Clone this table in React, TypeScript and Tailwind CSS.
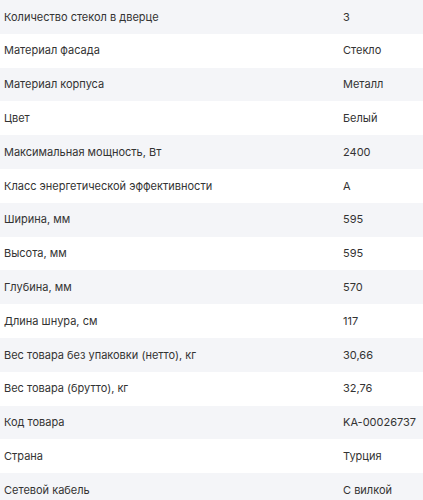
const specs = [
  ["Количество стекол в дверце", "3"],
  ["Материал фасада", "Стекло"],
  ["Материал корпуса", "Металл"],
  ["Цвет", "Белый"],
  ["Максимальная мощность, Вт", "2400"],
  ["Класс энергетической эффективности", "A"],
  ["Ширина, мм", "595"],
  ["Высота, мм", "595"],
  ["Глубина, мм", "570"],
  ["Длина шнура, см", "117"],
  ["Вес товара без упаковки (нетто), кг", "30,66"],
  ["Вес товара (брутто), кг", "32,76"],
  ["Код товара", "KA-00026737"],
  ["Страна", "Турция"],
  ["Сетевой кабель", "С вилкой"],
];

export default function App() {
  return (
    <div className="w-[423px] h-[500px] overflow-hidden bg-white font-['Inter',sans-serif] text-[11px] text-[#333]">
      {specs.map(([label, value], i) => (
        <div
          key={label}
          className={`flex items-center h-[33.8px] whitespace-nowrap ${i % 2 === 0 ? "bg-[#f4f5f8]" : "bg-white"}`}
        >
          <div className="w-[343px] pl-[4px]">{label}</div>
          <div className="flex-1">{value}</div>
        </div>
      ))}
    </div>
  );
}
